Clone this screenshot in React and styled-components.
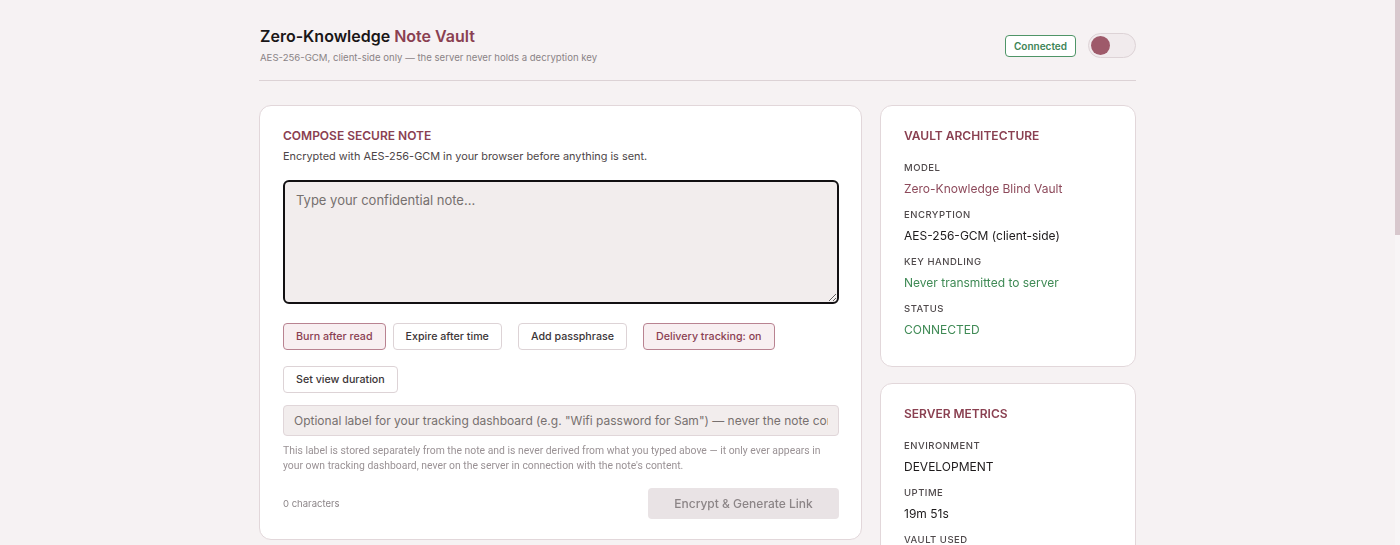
import React from "react";
import styled, { createGlobalStyle } from "styled-components";

const Global = createGlobalStyle`
  html { background: #f6f2f3; }
  body {
    margin: 0;
    padding-right: 5px;
    background: #f6f2f3;
    font-family: Inter, "Liberation Sans", sans-serif;
    color: #1d1a1b;
  }
  * { box-sizing: border-box; }
`;

const ScrollRail = styled.div`
  position: fixed;
  top: 0;
  right: 0;
  width: 5px;
  height: 100vh;
  background: #f8f5f6;
`;

const ScrollThumb = styled.div`
  width: 100%;
  height: 235px;
  background: #d8c8cd;
`;

const Page = styled.div`
  max-width: 877px;
  margin: 0 auto;
  padding: 26px 0 60px;
`;

const Header = styled.header`
  display: flex;
  align-items: center;
  justify-content: space-between;
  padding-bottom: 15px;
  border-bottom: 1px solid #dcd2d5;
  margin-bottom: 24px;
`;

const TitleBlock = styled.div`
  display: flex;
  flex-direction: column;
  gap: 5px;
  padding-left: 1px;
`;

const Title = styled.h1`
  margin: 0;
  font-size: 16px;
  line-height: 20px;
  font-weight: 600;
  color: #1a1617;
  span { color: #8a4051; }
`;

const Subtitle = styled.p`
  margin: 0;
  font-size: 9.6px;
  line-height: 14px;
  color: #8a8386;
`;

const HeaderRight = styled.div`
  display: flex;
  align-items: center;
  gap: 12px;
`;

const Badge = styled.span`
  display: inline-flex;
  align-items: center;
  height: 22px;
  padding: 0 8px;
  border: 1px solid #4f9567;
  border-radius: 4px;
  background: #fff;
  color: #3d8456;
  font-size: 10px;
  font-weight: 600;
`;

const Toggle = styled.button`
  width: 48px;
  height: 25px;
  border-radius: 13px;
  border: 1px solid #ddd3d6;
  background: #f1ebed;
  padding: 2px;
  display: flex;
  align-items: center;
  cursor: pointer;
`;

const Knob = styled.span`
  width: 19px;
  height: 19px;
  border-radius: 50%;
  background: #9e5a6a;
`;

const Grid = styled.div`
  display: grid;
  grid-template-columns: 1fr 256px;
  gap: 18px;
  align-items: start;
`;

const Column = styled.div`
  display: flex;
  flex-direction: column;
  gap: 16px;
`;

const Card = styled.section`
  background: #fff;
  border: 1px solid #e2d7da;
  border-radius: 12px;
  padding: ${(p) => p.$pad || "22px 22px 20px 23px"};
`;

const CardTitle = styled.h2`
  margin: 0;
  font-size: 12px;
  line-height: 16px;
  font-weight: 600;
  color: #8a4051;
  text-transform: uppercase;
`;

const CardLead = styled.p`
  margin: 5px 0 16px;
  font-size: 10.9px;
  line-height: 15px;
  color: #4d4648;
`;

const NoteArea = styled.textarea`
  display: block;
  width: 100%;
  height: 124px;
  resize: vertical;
  border: 2px solid #121012;
  border-radius: 6px;
  background: #f2eded;
  padding: 9px 11px;
  font-family: inherit;
  font-size: 13px;
  line-height: 18px;
  color: #222;
  outline: none;
  &::placeholder { color: #76706f; }
`;

const Options = styled.div`
  display: flex;
  flex-wrap: wrap;
  gap: 16px;
  margin-top: 19px;
`;

const OptionGroup = styled.div`
  display: flex;
  gap: 7px;
`;

const OptionButton = styled.button`
  height: 27px;
  padding: 0 12px;
  border-radius: 4px;
  border: 1px solid ${(p) => (p.$active ? "#b98391" : "#ddd3d6")};
  background: ${(p) => (p.$active ? "#f8eff1" : "#fff")};
  color: ${(p) => (p.$active ? "#8a4051" : "#3b3537")};
  font-family: inherit;
  font-size: 10.7px;
  font-weight: 500;
  cursor: pointer;
`;

const LabelInput = styled.input`
  display: block;
  width: 100%;
  height: 31px;
  margin-top: 12px;
  padding: 0 10px;
  border: 1px solid #e0d6d9;
  border-radius: 4px;
  background: #f2eded;
  font-family: inherit;
  font-size: 12px;
  color: #333;
  outline: none;
  &::placeholder { color: #77706f; }
`;

const Hint = styled.p`
  margin: 7px 0 0;
  font-family: Roboto, "Liberation Sans", sans-serif;
  font-size: 10.4px;
  line-height: 15px;
  color: #9a9295;
`;

const Footer = styled.div`
  display: flex;
  align-items: center;
  justify-content: space-between;
  margin-top: 15px;
`;

const Count = styled.span`
  font-size: 9.5px;
  color: #8c8588;
`;

const SubmitButton = styled.button`
  width: 191px;
  height: 31px;
  border: none;
  border-radius: 4px;
  background: #e9e3e5;
  color: #8c8587;
  font-family: inherit;
  font-size: 12px;
  font-weight: 500;
  cursor: not-allowed;
`;

const InfoList = styled.dl`
  margin: 17px 0 0;
  display: flex;
  flex-direction: column;
  gap: 11px;
`;

const InfoItem = styled.div`
  display: flex;
  flex-direction: column;
  gap: 6px;
`;

const InfoLabel = styled.dt`
  font-size: 9.5px;
  line-height: 14px;
  letter-spacing: 0.5px;
  color: #4f494b;
  text-transform: uppercase;
  font-weight: 500;
`;

const toneColor = { accent: "#8d4a5b", ok: "#3f8a55", plain: "#1d1a1b" };

const InfoValue = styled.dd`
  margin: 0;
  font-size: 12px;
  line-height: 16px;
  color: ${(p) => toneColor[p.$tone || "plain"]};
`;

const ActivityList = styled.ul`
  list-style: none;
  margin: 16px 0 0;
  padding: 0;
  display: flex;
  flex-direction: column;
  gap: 10px;
`;

const ActivityRow = styled.li`
  display: flex;
  justify-content: space-between;
  padding: 10px 12px;
  border: 1px solid #ece3e6;
  border-radius: 6px;
  font-size: 12px;
  color: #4d4648;
`;

const architecture = [
  { label: "Model", value: "Zero-Knowledge Blind Vault", tone: "accent" },
  { label: "Encryption", value: "AES-256-GCM (client-side)" },
  { label: "Key handling", value: "Never transmitted to server", tone: "ok" },
  { label: "Status", value: "CONNECTED", tone: "ok" },
];

const metrics = [
  { label: "Environment", value: "DEVELOPMENT" },
  { label: "Uptime", value: "19m 51s" },
  { label: "Vault used", value: "0 notes" },
  { label: "Requests served", value: "42" },
  { label: "Avg. response", value: "12 ms" },
  { label: "Memory", value: "48.2 MB" },
  { label: "Node version", value: "v20.11.0" },
];

const activity = [
  ["No notes sent yet", "—"],
  ["Tracking dashboard", "empty"],
  ["Last key rotation", "never"],
  ["Pending deliveries", "0"],
  ["Expired notes purged", "0"],
];

function InfoCard({ title, items }) {
  return (
    <Card $pad="22px 23px 28px">
      <CardTitle>{title}</CardTitle>
      <InfoList>
        {items.map((it) => (
          <InfoItem key={it.label}>
            <InfoLabel>{it.label}</InfoLabel>
            <InfoValue $tone={it.tone}>{it.value}</InfoValue>
          </InfoItem>
        ))}
      </InfoList>
    </Card>
  );
}

export default function App() {
  const [note, setNote] = React.useState("");
  return (
    <>
      <Global />
      <ScrollRail>
        <ScrollThumb />
      </ScrollRail>
      <Page>
        <Header>
          <TitleBlock>
            <Title>
              Zero-Knowledge <span>Note Vault</span>
            </Title>
            <Subtitle>
              AES-256-GCM, client-side only — the server never holds a decryption key
            </Subtitle>
          </TitleBlock>
          <HeaderRight>
            <Badge>Connected</Badge>
            <Toggle aria-label="Toggle theme">
              <Knob />
            </Toggle>
          </HeaderRight>
        </Header>

        <Grid>
          <Column>
            <Card>
              <CardTitle>Compose secure note</CardTitle>
              <CardLead>
                Encrypted with AES-256-GCM in your browser before anything is sent.
              </CardLead>
              <NoteArea
                autoFocus
                placeholder="Type your confidential note..."
                value={note}
                onChange={(e) => setNote(e.target.value)}
              />
              <Options>
                <OptionGroup>
                  <OptionButton $active>Burn after read</OptionButton>
                  <OptionButton>Expire after time</OptionButton>
                </OptionGroup>
                <OptionButton>Add passphrase</OptionButton>
                <OptionButton $active>Delivery tracking: on</OptionButton>
                <OptionButton>Set view duration</OptionButton>
              </Options>
              <LabelInput placeholder={'Optional label for your tracking dashboard (e.g. "Wifi password for Sam") — never the note content'} />
              <Hint>
                This label is stored separately from the note and is never derived from what you
                typed above — it only ever appears in your own tracking dashboard, never on the
                server in connection with the note's content.
              </Hint>
              <Footer>
                <Count>{note.length} characters</Count>
                <SubmitButton disabled>Encrypt &amp; Generate Link</SubmitButton>
              </Footer>
            </Card>
            <Card>
              <CardTitle>Recent activity</CardTitle>
              <ActivityList>
                {activity.map(([a, b]) => (
                  <ActivityRow key={a}>
                    <span>{a}</span>
                    <span>{b}</span>
                  </ActivityRow>
                ))}
              </ActivityList>
            </Card>
          </Column>
          <Column>
            <InfoCard title="Vault architecture" items={architecture} />
            <InfoCard title="Server metrics" items={metrics} />
          </Column>
        </Grid>
      </Page>
    </>
  );
}
